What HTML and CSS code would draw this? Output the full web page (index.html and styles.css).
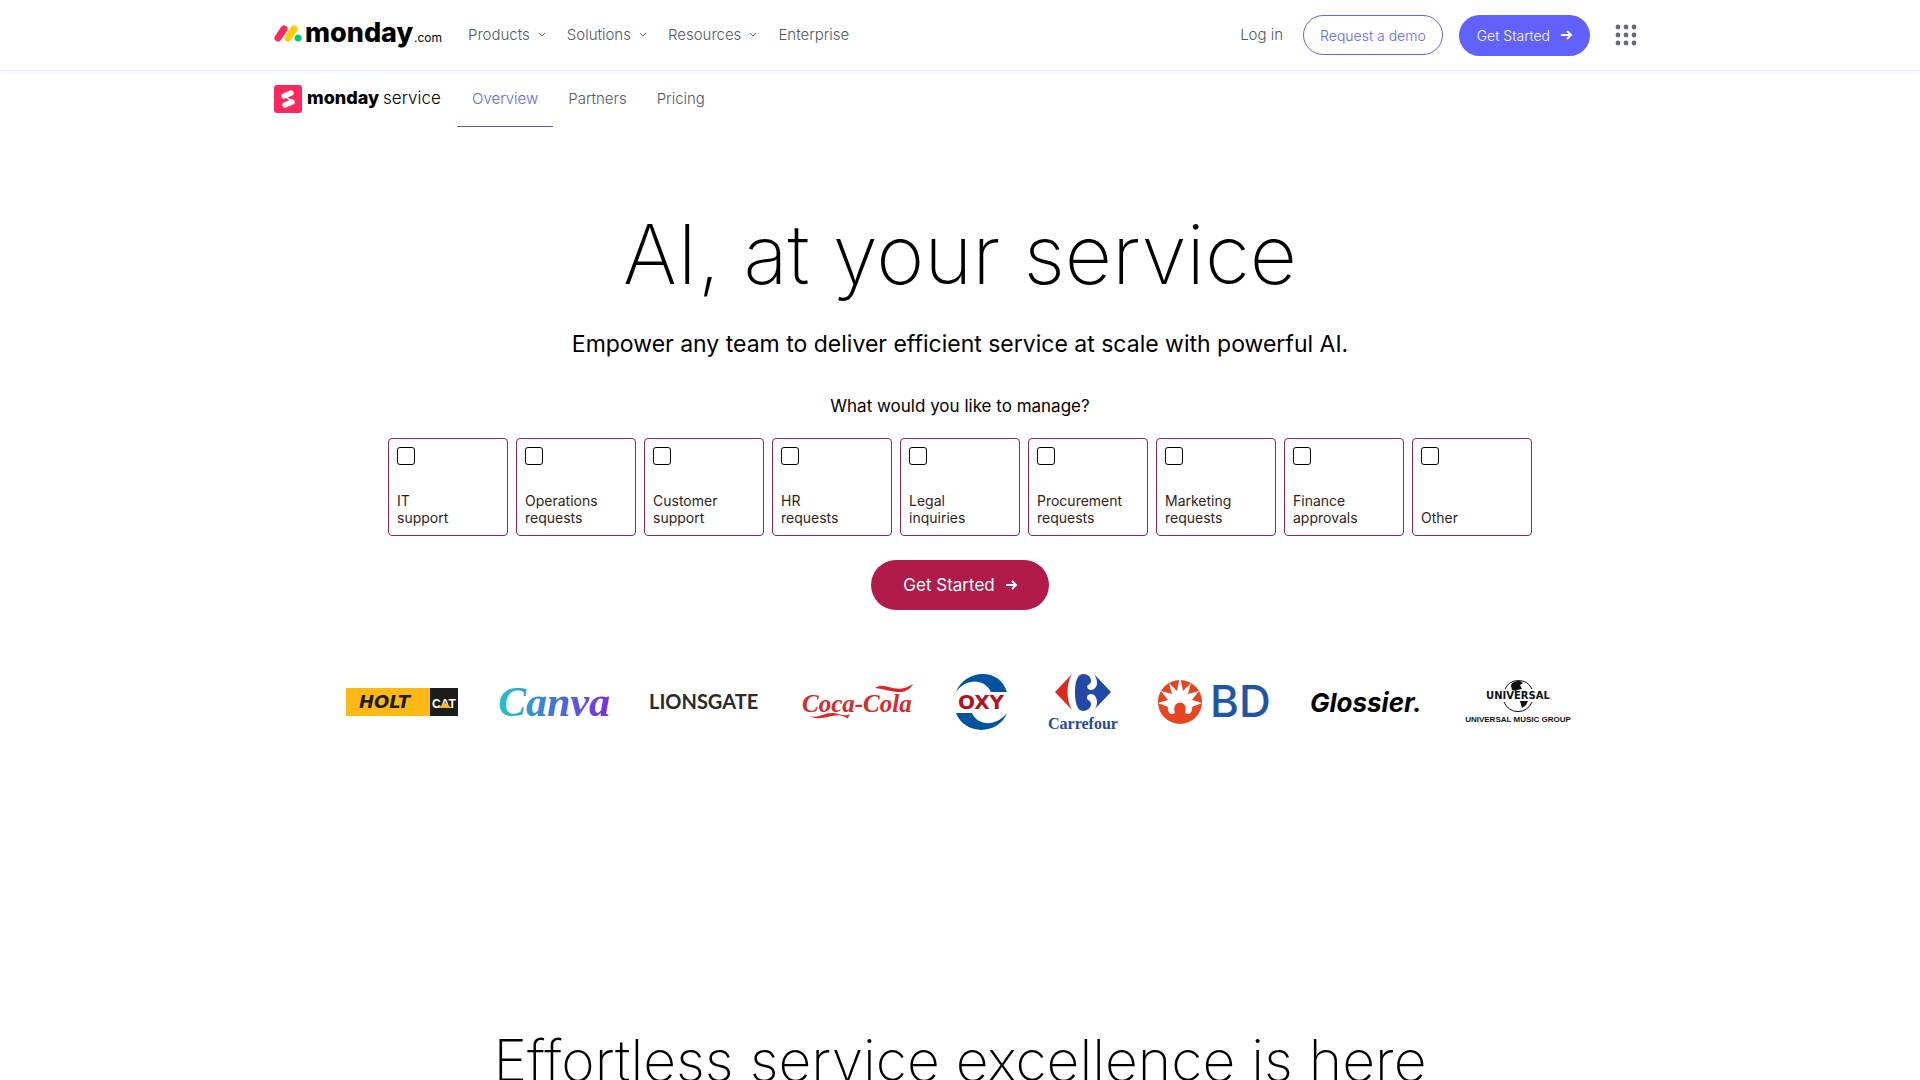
FILE: index.html
```html
<!DOCTYPE html>
<html lang="en">
<head>
<meta charset="UTF-8">
<meta name="viewport" content="width=device-width, initial-scale=1.0">
<title>monday service</title>
<link rel="stylesheet" href="styles.css">
</head>
<body>

<header class="header">
    <div class="header-inner">
        <a href="#" class="logo" aria-label="monday.com">
            <svg width="168" height="56" viewBox="0 0 168 56">
                <path d="M4 31 L10 22" stroke="#fb275d" stroke-width="7" stroke-linecap="round"/>
                <path d="M14 31 L20 22" stroke="#ffcc00" stroke-width="7" stroke-linecap="round"/>
                <circle cx="24" cy="31" r="3.5" fill="#00ca72"/>
                <text x="31" y="35" class="logo-bold">monday</text>
                <text x="140" y="35" class="logo-com">.com</text>
            </svg>
        </a>
        <nav class="main-nav">
            <button class="nav-item">Products <svg class="chevron" viewBox="0 0 8 6"><path d="M1 1l3 3 3-3"/></svg></button>
            <button class="nav-item">Solutions <svg class="chevron" viewBox="0 0 8 6"><path d="M1 1l3 3 3-3"/></svg></button>
            <button class="nav-item">Resources <svg class="chevron" viewBox="0 0 8 6"><path d="M1 1l3 3 3-3"/></svg></button>
            <a href="#" class="nav-item">Enterprise</a>
        </nav>
        <div class="header-actions">
            <a href="#" class="login">Log in</a>
            <button class="btn btn-outline">Request a demo</button>
            <button class="btn btn-primary">Get Started
                <svg class="arrow" viewBox="0 0 12 12"><path d="M1 6h10M7 2l4 4-4 4"/></svg>
            </button>
            <button class="apps" aria-label="Apps">
                <svg width="22" height="22" viewBox="0 0 22 22" fill="#676879">
                    <circle cx="3" cy="3" r="2.4"/><circle cx="11" cy="3" r="2.4"/><circle cx="19" cy="3" r="2.4"/>
                    <circle cx="3" cy="11" r="2.4"/><circle cx="11" cy="11" r="2.4"/><circle cx="19" cy="11" r="2.4"/>
                    <circle cx="3" cy="19" r="2.4"/><circle cx="11" cy="19" r="2.4"/><circle cx="19" cy="19" r="2.4"/>
                </svg>
            </button>
        </div>
    </div>
</header>

<div class="subnav">
    <a href="#" class="logo" aria-label="monday service">
        <svg width="168" height="28" viewBox="0 0 168 28">
            <rect width="28" height="28" rx="3" fill="#fb275d"/>
            <path d="M10 11L17 8M11 20L18 17" stroke="#fff" stroke-width="5.5" stroke-linecap="round"/>
            <path d="M9 11L18 17L19 16L12 11Z" fill="#fff"/>
            <text x="33" y="19" class="service-bold">monday</text>
            <text x="109" y="19" class="service-light">service</text>
        </svg>
    </a>
    <nav class="tabs">
        <a href="#" class="tab active">Overview</a>
        <a href="#" class="tab">Partners</a>
        <a href="#" class="tab">Pricing</a>
    </nav>
</div>

<main>
    <section class="hero">
        <h1>AI, at your service</h1>
        <p class="subtitle">Empower any team to deliver efficient service at scale with powerful AI.</p>
        <p class="question">What would you like to manage?</p>
        <div class="cards">
            <label class="card"><input type="checkbox"><span>IT<br>support</span></label>
            <label class="card"><input type="checkbox"><span>Operations<br>requests</span></label>
            <label class="card"><input type="checkbox"><span>Customer<br>support</span></label>
            <label class="card"><input type="checkbox"><span>HR<br>requests</span></label>
            <label class="card"><input type="checkbox"><span>Legal<br>inquiries</span></label>
            <label class="card"><input type="checkbox"><span>Procurement<br>requests</span></label>
            <label class="card"><input type="checkbox"><span>Marketing<br>requests</span></label>
            <label class="card"><input type="checkbox"><span>Finance<br>approvals</span></label>
            <label class="card"><input type="checkbox"><span>Other</span></label>
        </div>
        <button class="btn btn-start">Get Started
            <svg class="arrow" viewBox="0 0 12 12"><path d="M1 6h10M7 2l4 4-4 4"/></svg>
        </button>
    </section>

    <section class="brands">
        <!-- Holt Cat -->
        <svg width="112" height="56" viewBox="0 0 112 56">
            <rect y="14" width="84" height="28" fill="#fdb913"/>
            <rect x="84" y="14" width="28" height="28" fill="#1d1d1b"/>
            <text x="13" y="34" class="holt">HOLT</text>
            <text x="86" y="34" class="cat">CAT</text>
            <path d="M92 34l7-5 7 5z" fill="#fdb913"/>
        </svg>
        <!-- Canva -->
        <svg width="112" height="56" viewBox="0 0 112 56">
            <defs>
                <linearGradient id="canva" gradientUnits="userSpaceOnUse" x1="0" y1="0" x2="112" y2="0">
                    <stop offset="0" stop-color="#20c4cb"/>
                    <stop offset="0.5" stop-color="#4173d9"/>
                    <stop offset="1" stop-color="#7d2ae7"/>
                </linearGradient>
            </defs>
            <text x="0" y="42" class="canva" fill="url(#canva)">Canva</text>
        </svg>
        <!-- Lionsgate -->
        <svg width="112" height="56" viewBox="0 0 112 56">
            <text x="-1" y="35" class="lionsgate">LIONSGATE</text>
        </svg>
        <!-- Coca-Cola -->
        <svg width="112" height="56" viewBox="0 0 112 56">
            <text x="0" y="38" class="coca">Coca-Cola</text>
            <path d="M7 42C16 45 22 38 32 39C39 40 42 43 48 40C45 44 48 46 43 43C32 37 21 49 7 42Z" fill="#da292e"/>
            <path d="M73 14C84 6 92 22 111 10C103 24 89 16 73 14Z" fill="#da292e"/>
        </svg>
        <!-- Oxy -->
        <svg width="54" height="56" viewBox="0 0 54 56">
            <path d="M2 18C10 -4 45 -8 53 18H37C31 5 13 3 2 18Z" fill="#00549f"/>
            <path d="M2 39H18C23 51 41 54 53 39C44 62 10 61 2 39Z" fill="#00549f"/>
            <text x="27" y="35" class="oxy" text-anchor="middle">OXY</text>
        </svg>
        <!-- Carrefour -->
        <svg width="70" height="56" viewBox="0 0 70 56">
            <path d="M24 0L7 18L24 36C18 26 18 10 24 0Z" fill="#dc291e"/>
            <path d="M35 0C40 0 43 3 43 7C43 9 42 10 40 11C38 13 40 16 43 16C46 16 49 13 49 9C49 6 48 3 46 0L63 18L46 36C48 34 49 31 49 28C49 23 46 20 43 20C39 20 38 24 40 26C42 27 43 28 43 30C43 34 39 37 35 37C29 37 27 28 27 18C27 9 29 0 35 0Z" fill="#2349a8"/>
            <text x="35" y="55" class="carrefour" text-anchor="middle">Carrefour</text>
        </svg>
        <!-- BD -->
        <svg width="112" height="56" viewBox="0 0 112 56">
            <circle cx="22" cy="28" r="22" fill="#e8441f"/>
            <path d="M0 29L10 26L3 17L14 20L11 9L19 17L22 2L25 17L33 9L30 20L41 17L34 26L44 29L34 33C35 38 31 42 27 39C29 32 26 30 22 30C18 30 15 33 17 39C13 42 9 38 10 33Z" fill="#fff"/>
            <circle cx="22" cy="34" r="5.5" fill="#e8441f"/>
            <text x="52" y="43" class="bd">BD</text>
        </svg>
        <!-- Glossier -->
        <svg width="112" height="56" viewBox="0 0 112 56">
            <text x="0" y="38" class="glossier">Glossier.</text>
        </svg>
        <!-- Universal Music Group -->
        <svg width="112" height="56" viewBox="0 0 112 56">
            <path d="M43 15A15 15 0 0 1 70 15M42 28A15 15 0 0 0 70 28" fill="none" stroke="#111"/>
            <path d="M49 12C49 9 52 7 58 7L61 9L58 11L60 15L55 16L54 17L50 16Z" fill="#111"/>
            <path d="M58 27H66L64 31L60 34Z" fill="#111"/>
            <text x="56" y="25" class="universal" text-anchor="middle">UNIVERSAL</text>
            <text x="56" y="48" class="umg" text-anchor="middle">UNIVERSAL MUSIC GROUP</text>
        </svg>
    </section>

    <section class="excellence">
        <h2>Effortless service excellence is here</h2>
    </section>
</main>

</body>
</html>
```

FILE: styles.css
```css
* {
    box-sizing: border-box;
}

body {
    margin: 0;
    font-family: Inter, sans-serif;
    color: #000;
    background-color: #fff;
}

a {
    color: inherit;
    text-decoration: none;
}

button {
    font-family: inherit;
    border: none;
    background: none;
    cursor: pointer;
}

h1, h2, p {
    margin: 0;
}

svg {
    display: block;
    flex-shrink: 0;
    overflow: visible;
}

/* Header */
.header {
    border-bottom: 1px solid #e7effb;
    box-shadow: 0 2px 6px rgba(0, 100, 220, 0.05);
}

.header-inner,
.subnav {
    display: flex;
    align-items: center;
    max-width: 1372px;
    margin: 0 auto;
}

.header-inner {
    height: 70px;
}

.main-nav {
    display: flex;
    gap: 21px;
    margin-left: 26px;
}

.nav-item,
.login,
.tab {
    font-size: 15px;
    line-height: 24px;
    font-weight: 300;
    color: #535768;
}

.nav-item {
    display: flex;
    align-items: center;
    gap: 8px;
    padding: 0;
}

.chevron {
    width: 8px;
    height: 6px;
    fill: none;
    stroke: #676879;
}

.header-actions {
    display: flex;
    align-items: center;
    gap: 16px;
    margin-left: auto;
}

.login {
    margin-right: 4px;
}

.btn {
    display: flex;
    align-items: center;
    gap: 10px;
    border-radius: 40px;
    font-size: 14px;
    font-weight: 300;
    padding: 0 16px;
    height: 40px;
}

.btn-outline {
    border: 1px solid #6161ff;
    color: #6161ff;
}

.btn-primary {
    height: 41px;
    padding: 0 18px;
    background-color: #6161ff;
    color: #fff;
}

.arrow {
    width: 12px;
    height: 12px;
    fill: none;
    stroke: #fff;
    stroke-width: 2;
}

.apps {
    padding: 9px;
}

/* Product bar */
.subnav {
    height: 56px;
}

.tabs {
    display: flex;
    align-self: stretch;
    margin-left: 15px;
}

.tab {
    display: flex;
    align-items: center;
    padding: 0 15px;
    border-bottom: 1px solid transparent;
}

.tab.active {
    color: #6161ff;
    border-bottom-color: #5559c7;
}

/* Hero */
.hero {
    display: flex;
    flex-direction: column;
    align-items: center;
    padding-top: 80px;
    text-align: center;
}

h1 {
    font-size: 82px;
    line-height: 96px;
    font-weight: 200;
}

.subtitle {
    margin-top: 25px;
    font-size: 23px;
    line-height: 32px;
}

.question {
    margin-top: 34px;
    font-size: 17px;
    line-height: 24px;
}

.cards {
    display: flex;
    gap: 8px;
    margin-top: 20px;
}

.card {
    display: flex;
    flex-direction: column;
    justify-content: space-between;
    width: 120px;
    height: 98px;
    padding: 8px 8px 9px;
    border: 1px solid #a32150;
    border-radius: 4px;
    font-size: 14px;
    line-height: 17px;
    text-align: left;
    color: #301d20;
    cursor: pointer;
}

.card input {
    appearance: none;
    width: 18px;
    height: 18px;
    margin: 0;
    border: 1px solid #000;
    border-radius: 3px;
}

.card input:checked {
    background-color: #b01b49;
}

.btn-start {
    margin-top: 24px;
    height: 50px;
    padding: 0 32px;
    font-size: 17px;
    font-weight: 400;
    background-color: #b01b49;
    color: #fff;
}

/* Customer logos */
.brands {
    display: flex;
    justify-content: center;
    gap: 40px;
    margin-top: 64px;
}

.excellence {
    margin-top: 295px;
    text-align: center;
}

h2 {
    font-size: 57px;
    line-height: 72px;
    font-weight: 200;
}

/* Lettering in the logos */
.logo-bold {
    font-size: 27px;
    font-weight: 800;
}

.logo-com {
    font-size: 12px;
}

.service-bold {
    font-size: 18px;
    font-weight: 800;
}

.service-light {
    font-size: 17px;
    font-weight: 300;
}

.holt {
    font: italic bold 18px "DejaVu Sans", sans-serif;
    fill: #1d1d1b;
}

.cat {
    font: bold 12px "Liberation Sans", sans-serif;
    fill: #fff;
}

.canva {
    font: italic bold 42px "Liberation Serif", serif;
}

.lionsgate {
    font: bold 20px Lato, sans-serif;
    fill: #2b2b2b;
}

.coca {
    font: italic bold 25px "Liberation Serif", serif;
    fill: #da292e;
}

.oxy {
    font: bold 20px "DejaVu Sans", sans-serif;
    fill: #b5121b;
}

.carrefour {
    font: bold 16px "Liberation Serif", serif;
    fill: #2349a8;
}

.bd {
    font: 500 44px Inter, sans-serif;
    fill: #1f56a5;
}

.glossier {
    font: italic 700 26px Inter, sans-serif;
    fill: #000;
}

.universal {
    font: bold 10px "DejaVu Sans", sans-serif;
    fill: #111;
}

.umg {
    font: bold 8px "Liberation Sans", sans-serif;
    fill: #111;
}
```
